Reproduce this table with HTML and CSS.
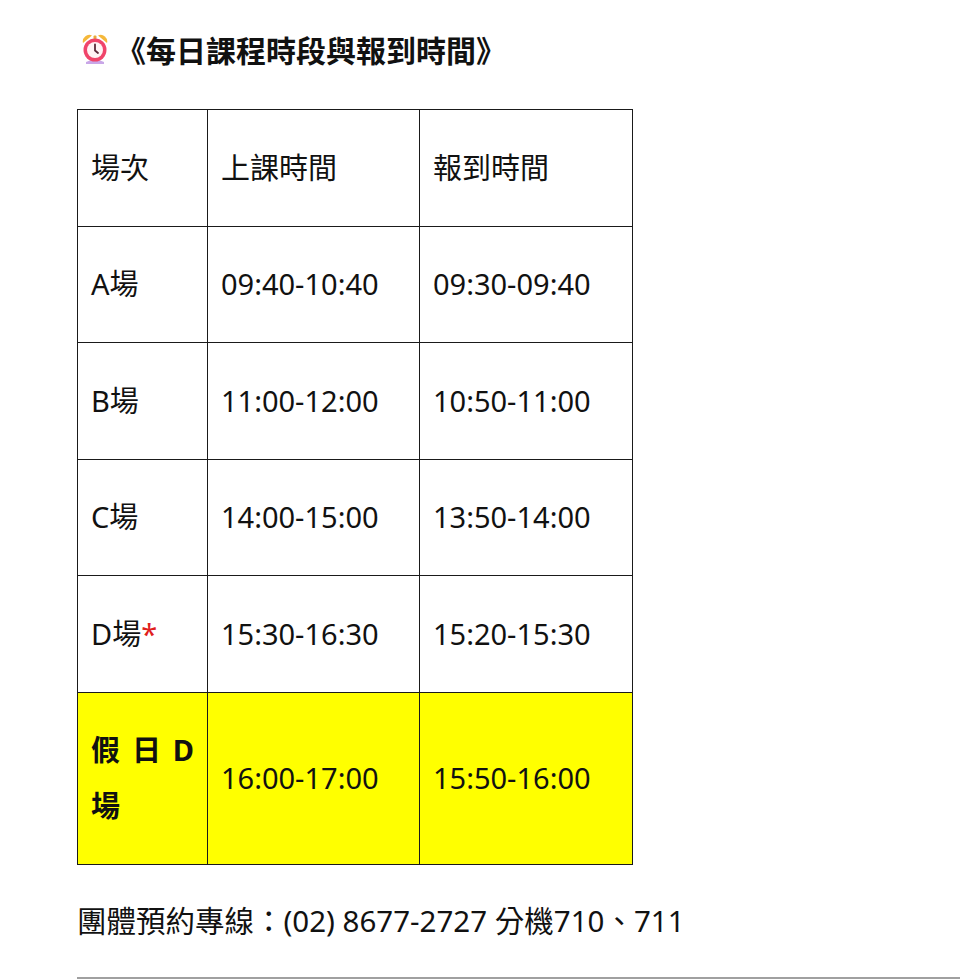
FILE: index.html
```html
<!DOCTYPE html>
<html lang="zh-Hant">
<head>
<meta charset="utf-8">
<title>每日課程時段與報到時間</title>
<link rel="stylesheet" href="styles.css">
</head>
<body>
<div class="page">
  <h2 class="title">
    <svg class="clock" viewBox="0 0 26 30" width="26" height="30" aria-hidden="true">
      <path d="M1 9 A6.5 6.5 0 0 1 10 1.5 Z" fill="#f5b83a"/>
      <path d="M25 9 A6.5 6.5 0 0 0 16 1.5 Z" fill="#f5b83a"/>
      <rect x="11.5" y="1.5" width="3" height="4" rx="1" fill="#e8a83a"/>
      <path d="M4 28 Q13 23 22 28 L22 30 L4 30 Z" fill="#c9a7e8"/>
      <circle cx="13" cy="16" r="11.5" fill="#f0446a"/>
      <circle cx="13" cy="16" r="8" fill="#fff3f5"/>
      <path d="M13 10.5 V16.5 L16 19" stroke="#5a2a3a" stroke-width="1.8" fill="none" stroke-linecap="round"/>
    </svg>
    <span class="title-text">《每日課程時段與報到時間》</span>
  </h2>

  <table class="schedule">
    <colgroup>
      <col class="c1"><col class="c2"><col class="c3">
    </colgroup>
    <tr><td>場次</td><td>上課時間</td><td>報到時間</td></tr>
    <tr><td>A場</td><td>09:40-10:40</td><td>09:30-09:40</td></tr>
    <tr><td>B場</td><td>11:00-12:00</td><td>10:50-11:00</td></tr>
    <tr><td>C場</td><td>14:00-15:00</td><td>13:50-14:00</td></tr>
    <tr><td>D場<span class="star">*</span></td><td>15:30-16:30</td><td>15:20-15:30</td></tr>
    <tr class="holiday"><td class="justify"><strong>假日D場</strong></td><td>16:00-17:00</td><td>15:50-16:00</td></tr>
  </table>

  <p class="contact">團體預約專線：(02) 8677-2727 分機710、711</p>
  <hr class="rule">
</div>
</body>
</html>
```

FILE: styles.css
```css
html, body {
  margin: 0;
  padding: 0;
  background: #fff;
}
body {
  font-family: "Noto Sans", "Noto Sans CJK TC", sans-serif;
  color: #111;
}
.page {
  padding-left: 77px;
}
.title {
  margin: 0;
  padding-top: 28px;
  height: 42px;
  display: flex;
  align-items: center;
  font-size: 30px;
  font-weight: 700;
  line-height: 42px;
}
.clock {
  margin-left: 5px;
  margin-right: 8px;
  flex: none;
}
.title-text {
  letter-spacing: 0;
  font-family: "Noto Sans CJK TC", sans-serif;
}
.schedule {
  margin-top: 39px;
  border-collapse: collapse;
  table-layout: fixed;
  width: 556px;
  font-size: 29px;
  line-height: 56px;
}
.c1 { width: 130px; }
.c2 { width: 212px; }
.c3 { width: 213px; }
.schedule td {
  border: 1px solid #1a1a1a;
  padding: 29.75px 13px;
  vertical-align: middle;
  white-space: normal;
}
.holiday td {
  background: #ffff00;
}
.justify {
  text-align: justify;
}
.justify strong {
  font-weight: 700;
}
.star {
  color: #e0201c;
}
.contact {
  margin: 36px 0 0;
  font-size: 29.5px;
  line-height: 40px;
}
.rule {
  margin: 36px 0 0;
  border: 0;
  border-top: 2px solid #a0a0a0;
  height: 0;
}
```
